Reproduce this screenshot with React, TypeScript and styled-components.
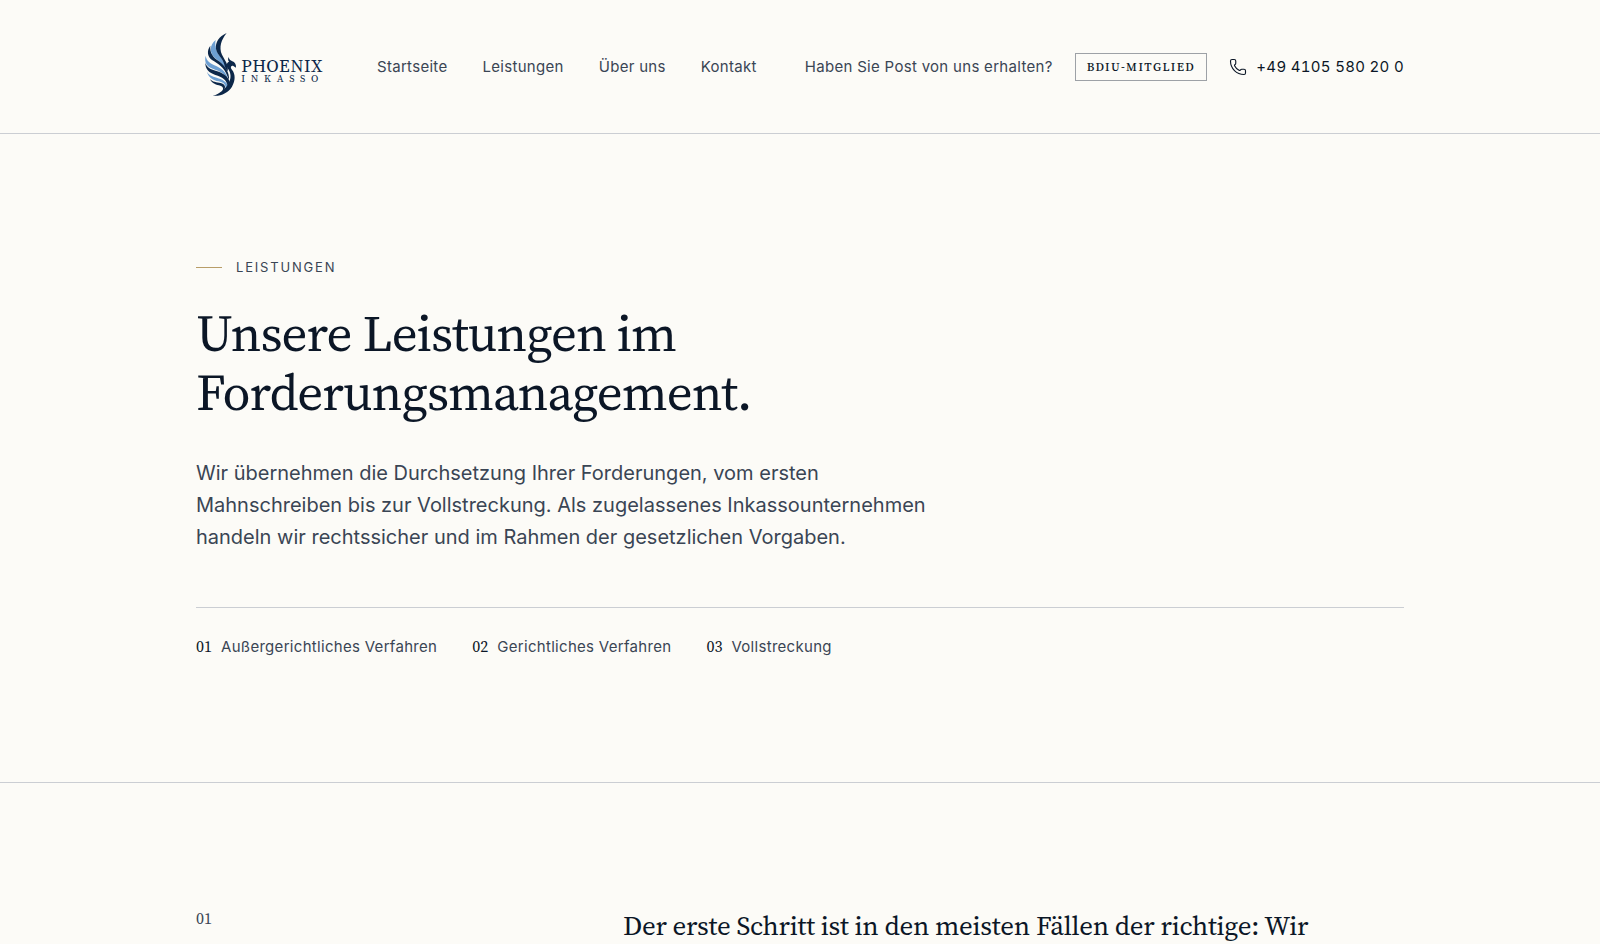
import React from "react";
import styled, { createGlobalStyle } from "styled-components";
import { Phone } from "lucide-react";

const sans = `Inter, "Liberation Sans", sans-serif`;
const serif = `"Source Serif 4", "Liberation Serif", serif`;

const color = {
  paper: "#fcfbf7",
  ink: "#0b1626",
  text: "#3a4554",
  line: "#cbced3",
  gold: "#b89d68",
  navy: "#0c2749",
  sky: "#6d9fd2",
};

const GlobalStyle = createGlobalStyle`
  *, *::before, *::after { box-sizing: border-box; }
  body {
    margin: 0;
    background: ${color.paper};
    color: ${color.text};
    font-family: ${sans};
    font-size: 15px;
    line-height: 24px;
    letter-spacing: 0.02em;
  }
  h1, h2, p, ol { margin: 0; padding: 0; }
  a { color: inherit; text-decoration: none; }
`;

const Container = styled.div`
  width: 100%;
  max-width: 1280px;
  margin: 0 auto;
  padding: 0 36px;
`;

const Header = styled.header`
  border-bottom: 1px solid ${color.line};
`;

const HeaderBar = styled(Container)`
  display: flex;
  align-items: center;
  justify-content: space-between;
  padding-top: 20px;
  padding-bottom: 20px;
`;

const HeaderGroup = styled.div<{ $gap: number }>`
  display: flex;
  align-items: center;
  gap: ${(p) => p.$gap}px;
  white-space: nowrap;
`;

const LogoLink = styled.a`
  display: block;
  line-height: 0;
`;

const Nav = styled.nav`
  display: flex;
  gap: 35px;
`;

const NavLink = styled.a`
  color: ${color.text};
  &:hover { color: ${color.ink}; }
`;

const Badge = styled.span`
  padding: 4px 11px;
  border: 1px solid #9da1a6;
  color: ${color.ink};
  font: 500 12px/18px ${serif};
  letter-spacing: 0.12em;
`;

const PhoneLink = styled.a`
  display: flex;
  align-items: center;
  gap: 9px;
  color: ${color.ink};
  font-variant-numeric: tabular-nums;
`;

const Section = styled.section<{ $divided?: boolean }>`
  padding: 125px 0 ${(p) => (p.$divided ? 123 : 0)}px;
  border-bottom: ${(p) => (p.$divided ? `1px solid ${color.line}` : "0")};
`;

const Eyebrow = styled.p`
  display: flex;
  align-items: center;
  gap: 14px;
  font-size: 13px;
  line-height: 16px;
  letter-spacing: 0.14em;
  text-transform: uppercase;
  &::before {
    content: "";
    width: 26px;
    height: 1px;
    background: ${color.gold};
  }
`;

const Title = styled.h1`
  max-width: 640px;
  margin-top: 29px;
  color: ${color.ink};
  font: 400 51px/59px ${serif};
  letter-spacing: -0.02em;
`;

const Lead = styled.p`
  max-width: 760px;
  margin-top: 35px;
  font-size: 20px;
  line-height: 32px;
  letter-spacing: normal;
`;

const Steps = styled.ol`
  display: flex;
  flex-wrap: wrap;
  gap: 12px 35px;
  margin-top: 54px;
  padding-top: 26px;
  border-top: 1px solid ${color.line};
  list-style: none;
`;

const StepLink = styled.a`
  display: flex;
  align-items: baseline;
  gap: 9px;
`;

const Numeral = styled.span`
  color: ${color.ink};
  font-family: ${serif};
  font-size: 16px;
  letter-spacing: normal;
`;

const SectionNumeral = styled(Numeral)`
  color: ${color.text};
  line-height: 20px;
`;

const Split = styled.div`
  display: grid;
  grid-template-columns: minmax(0, 5fr) minmax(0, 11fr);
  column-gap: 72px;
`;

const Statement = styled.h2`
  color: ${color.ink};
  font: 400 27px/35px ${serif};
  letter-spacing: -0.01em;
`;

function Logo() {
  return (
    <svg width="136" height="93" viewBox="18 0 408 279" role="img" aria-label="Phoenix Inkasso">
      <g fill={color.sky}>
        <path d="M77 60C58 76 58 98 74 113C88 125 102 133 110 156L104 132C98 116 83 105 79 90C76 79 75 69 77 60Z" />
        <path d="M47 107C42 126 50 140 70 147C90 154 106 162 114 180C113 164 99 147 80 139C61 130 49 123 47 107Z" />
        <path d="M51 155C56 174 70 180 86 184C99 187 107 192 107 205L114 196C108 184 97 178 80 173C66 169 56 165 51 155Z" />
      </g>
      <g fill={color.navy}>
        <path d="M110 39C87 49 75 68 78 87C81 105 98 113 103 134C105 143 108 149 113 154C117 133 103 119 96 104C86 82 94 59 110 39Z" />
        <path d="M61 77C49 93 53 110 66 120C83 131 103 141 112 168L117 180C119 158 105 137 87 124C68 111 59 98 61 77Z" />
        <path d="M46 127C45 148 58 159 76 165C97 171 110 180 113 197L119 187C116 170 99 159 79 153C60 148 48 141 46 127Z" />
        <path d="M60 177C66 192 80 194 91 197C101 200 101 208 95 215L103 209C108 199 104 192 92 189C80 187 67 186 60 177Z" />
        <path d="M116 111C114 116 113 121 117 125C108 129 109 139 115 148C123 160 124 174 117 187C110 203 98 214 84 221C79 224 74 226 68 227C92 230 115 218 126 200C137 182 136 163 127 151C120 142 122 137 129 137L138 143C139 133 134 126 127 124C121 121 117 118 116 111Z" />
      </g>
      <g fill={color.navy} fontFamily={serif}>
        <text x="154" y="155" fontSize="53" letterSpacing="2">PHOENIX</text>
        <text x="154" y="187" fontSize="31" letterSpacing="17">INKASSO</text>
      </g>
    </svg>
  );
}

const navItems = ["Startseite", "Leistungen", "Über uns", "Kontakt"];
const steps = ["Außergerichtliches Verfahren", "Gerichtliches Verfahren", "Vollstreckung"];

const pad = (n: number) => String(n).padStart(2, "0");

export default function App() {
  return (
    <>
      <GlobalStyle />
      <Header>
        <HeaderBar>
          <HeaderGroup $gap={45}>
            <LogoLink href="#start"><Logo /></LogoLink>
            <Nav aria-label="Hauptnavigation">
              {navItems.map((item) => (
                <NavLink key={item} href="#">{item}</NavLink>
              ))}
            </Nav>
          </HeaderGroup>
          <HeaderGroup $gap={22}>
            <NavLink href="#post">Haben Sie Post von uns erhalten?</NavLink>
            <Badge>BDIU-MITGLIED</Badge>
            <PhoneLink href="tel:+494105580200">
              <Phone size={18} strokeWidth={1.5} aria-hidden />
              +49 4105 580 20 0
            </PhoneLink>
          </HeaderGroup>
        </HeaderBar>
      </Header>
      <main>
        <Section $divided>
          <Container>
            <Eyebrow>Leistungen</Eyebrow>
            <Title>Unsere Leistungen im Forderungsmanagement.</Title>
            <Lead>
              Wir übernehmen die Durchsetzung Ihrer Forderungen, vom ersten Mahnschreiben bis zur
              Vollstreckung. Als zugelassenes Inkassounternehmen handeln wir rechtssicher und im
              Rahmen der gesetzlichen Vorgaben.
            </Lead>
            <Steps>
              {steps.map((step, i) => (
                <li key={step}>
                  <StepLink href={`#schritt-${i + 1}`}>
                    <Numeral>{pad(i + 1)}</Numeral>
                    {step}
                  </StepLink>
                </li>
              ))}
            </Steps>
          </Container>
        </Section>
        <Section id="schritt-1">
          <Container>
            <Split>
              <SectionNumeral>01</SectionNumeral>
              <Statement>Der erste Schritt ist in den meisten Fällen der richtige: Wir</Statement>
            </Split>
          </Container>
        </Section>
      </main>
    </>
  );
}
